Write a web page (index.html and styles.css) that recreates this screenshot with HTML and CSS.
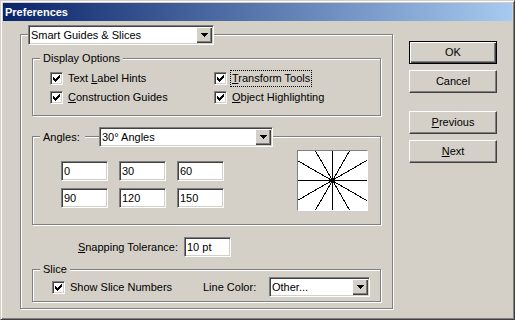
FILE: index.html
```html
<!DOCTYPE html>
<html lang="en">
<head>
  <meta charset="UTF-8" />
  <title>Preferences</title>
  <link rel="stylesheet" href="styles.css">
</head>
<body>
  <div class="window">
    <div class="titlebar">Preferences</div>

    <div class="layout">
      <!-- Main panel, the combo sits on its top edge -->
      <div class="main-group">
        <div class="combo combo-main">
          <span class="combo-text">Smart Guides &amp; Slices</span>
          <span class="combo-btn"><svg width="7" height="4" viewBox="0 0 7 4"><path d="M0 0h7v1H0zM1 1h5v1H1zM2 2h3v1H2zM3 3h1v1H3z"/></svg></span>
        </div>

        <div class="group group-display">
          <div class="legend">Display Options</div>
          <div class="check-grid">
            <div class="check">
              <span class="box"><svg width="7" height="7" viewBox="0 0 7 7"><path d="M0 2h1v3H0zM1 3h1v3H1zM2 4h1v3H2zM3 3h1v3H3zM4 2h1v3H4zM5 1h1v3H5zM6 0h1v3H6z"/></svg></span>
              <span>Text <u>L</u>abel Hints</span>
            </div>
            <div class="check">
              <span class="box"><svg width="7" height="7" viewBox="0 0 7 7"><path d="M0 2h1v3H0zM1 3h1v3H1zM2 4h1v3H2zM3 3h1v3H3zM4 2h1v3H4zM5 1h1v3H5zM6 0h1v3H6z"/></svg></span>
              <span class="focused"><u>T</u>ransform Tools</span>
            </div>
            <div class="check">
              <span class="box"><svg width="7" height="7" viewBox="0 0 7 7"><path d="M0 2h1v3H0zM1 3h1v3H1zM2 4h1v3H2zM3 3h1v3H3zM4 2h1v3H4zM5 1h1v3H5zM6 0h1v3H6z"/></svg></span>
              <span><u>C</u>onstruction Guides</span>
            </div>
            <div class="check">
              <span class="box"><svg width="7" height="7" viewBox="0 0 7 7"><path d="M0 2h1v3H0zM1 3h1v3H1zM2 4h1v3H2zM3 3h1v3H3zM4 2h1v3H4zM5 1h1v3H5zM6 0h1v3H6z"/></svg></span>
              <span><u>O</u>bject Highlighting</span>
            </div>
          </div>
        </div>

        <div class="group group-angles">
          <div class="legend-row">
            <span class="legend-label">Angles:</span>
            <div class="combo combo-angles">
              <span class="combo-text">30° Angles</span>
              <span class="combo-btn"><svg width="7" height="4" viewBox="0 0 7 4"><path d="M0 0h7v1H0zM1 1h5v1H1zM2 2h3v1H2zM3 3h1v1H3z"/></svg></span>
            </div>
          </div>
          <div class="angles-body">
            <div class="angle-grid">
              <div class="field">0</div>
              <div class="field">30</div>
              <div class="field">60</div>
              <div class="field">90</div>
              <div class="field">120</div>
              <div class="field">150</div>
            </div>
            <svg class="dial" width="69" height="59" viewBox="0 0 69 59" shape-rendering="crispEdges">
              <g stroke="#000" stroke-width="1">
                <line x1="-26" y1="29.5" x2="94" y2="29.5" />
                <line x1="34.5" y1="-31" x2="34.5" y2="89" />
                <line x1="-18" y1="59.5" x2="86" y2="-0.5" />
                <line x1="4.5" y1="81.5" x2="64.5" y2="-22.5" />
                <line x1="64.5" y1="81.5" x2="4.5" y2="-22.5" />
                <line x1="86" y1="59.5" x2="-18" y2="-0.5" />
              </g>
            </svg>
          </div>
        </div>

        <div class="snap-row">
          <span class="snap-label"><u>S</u>napping Tolerance:</span>
          <div class="field">10 pt</div>
        </div>

        <div class="group group-slice">
          <div class="legend">Slice</div>
          <div class="slice-row">
            <div class="check slice-check">
              <span class="box"><svg width="7" height="7" viewBox="0 0 7 7"><path d="M0 2h1v3H0zM1 3h1v3H1zM2 4h1v3H2zM3 3h1v3H3zM4 2h1v3H4zM5 1h1v3H5zM6 0h1v3H6z"/></svg></span>
              <span>Show Slice Numbers</span>
            </div>
            <span class="line-label">Line Color:</span>
            <div class="combo combo-slice">
              <span class="combo-text">Other...</span>
              <span class="combo-btn"><svg width="7" height="4" viewBox="0 0 7 4"><path d="M0 0h7v1H0zM1 1h5v1H1zM2 2h3v1H2zM3 3h1v1H3z"/></svg></span>
            </div>
          </div>
        </div>
      </div>

      <!-- Dialog buttons -->
      <div class="buttons">
        <div class="btn btn-default">OK</div>
        <div class="btn">Cancel</div>
        <div class="btn btn-gap"><u>P</u>revious</div>
        <div class="btn"><u>N</u>ext</div>
      </div>
    </div>
  </div>
</body>
</html>
```

FILE: styles.css
```css
body {
  margin: 0;
  font-family: "Liberation Sans", Arial, sans-serif;
  font-size: 11px;
  color: #000;
  background: #d4d0c8;
}

u {
  text-decoration: underline;
}

.window {
  width: 515px;
  height: 320px;
  box-sizing: border-box;
  background: #d4d0c8;
  border: 1px solid;
  border-color: #d4d0c8 #404040 #404040 #d4d0c8;
  box-shadow: inset 1px 1px #fff, inset -1px -1px #808080;
  padding: 2px;
}

.titlebar {
  height: 18px;
  line-height: 18px;
  padding-left: 2px;
  color: #fff;
  font-weight: bold;
  background: linear-gradient(to right, #0a246a, #a6caf0);
}

.layout {
  display: flex;
  align-items: flex-start;
  padding-left: 17px;
}

/* etched group boxes */
.main-group,
.group {
  box-sizing: border-box;
  border: 1px solid #808080;
  box-shadow: inset 1px 1px #fff, 1px 1px #fff;
}

.main-group {
  width: 373px;
  margin-top: 13px;
  margin-right: 16px;
  padding: 0 11px 6px;
}

.legend {
  width: fit-content;
  margin: -7px 0 0 7px;
  padding: 0 3px;
  line-height: 13px;
  background: #d4d0c8;
}

/* sunken combo boxes and fields */
.combo,
.field {
  box-sizing: border-box;
  height: 20px;
  background: #fff;
  border: 1px solid;
  border-color: #808080 #fff #fff #808080;
  box-shadow: inset 1px 1px #404040, inset -1px -1px #d4d0c8;
  padding: 1px;
}

.combo {
  display: flex;
}

.combo-text {
  flex: 1;
  line-height: 16px;
  padding-left: 1px;
  white-space: nowrap;
}

.combo-btn {
  width: 16px;
  height: 16px;
  box-sizing: border-box;
  background: #d4d0c8;
  box-shadow: inset 1px 1px #fff, inset -1px -1px #404040, inset -2px -2px #808080;
  display: flex;
  justify-content: center;
  align-items: center;
}

.combo-btn svg {
  display: block;
}

.field {
  line-height: 16px;
  padding-left: 2px;
}

.combo-main {
  width: 186px;
  margin: -10px 0 0 -4px;
}

.group-display {
  margin-top: 13px;
  padding-bottom: 11px;
}

.check-grid {
  display: grid;
  grid-template-columns: 164px auto;
  row-gap: 6px;
  margin-top: 7px;
  padding-left: 17px;
}

.check {
  display: flex;
  align-items: center;
  gap: 5px;
  line-height: 13px;
  white-space: nowrap;
}

.box {
  width: 13px;
  height: 13px;
  box-sizing: border-box;
  flex: none;
  background: #fff;
  border: 1px solid;
  border-color: #808080 #fff #fff #808080;
  box-shadow: inset 1px 1px #404040, inset -1px -1px #d4d0c8;
  display: flex;
  justify-content: center;
  align-items: center;
}

.box svg {
  display: block;
}

.focused {
  outline: 1px dotted #000;
  outline-offset: 1px;
}

.group-angles {
  margin-top: 20px;
  padding-bottom: 13px;
}

.legend-row {
  display: flex;
  margin: -10px 0 0 7px;
  height: 20px;
  align-items: center;
}

.legend-label {
  width: 45px;
  box-sizing: border-box;
  padding: 0 3px;
  line-height: 13px;
  background: #d4d0c8;
}

.combo-angles {
  width: 174px;
  margin-left: 14px;
}

.angles-body {
  display: flex;
  align-items: flex-start;
  margin-top: 3px;
  padding-left: 28px;
}

.angle-grid {
  display: grid;
  grid-template-columns: repeat(3, 47px);
  column-gap: 11px;
  row-gap: 7px;
  margin-top: 11px;
}

.dial {
  display: block;
  margin-left: auto;
  margin-right: 12px;
  background: #fff;
  border: 1px solid;
  border-color: #808080 #fff #fff #808080;
}

.snap-row {
  display: flex;
  align-items: center;
  margin-top: 12px;
}

.snap-label {
  width: 146px;
  text-align: right;
  margin-right: 6px;
}

.snap-row .field {
  width: 47px;
}

.group-slice {
  margin-top: 12px;
  padding-bottom: 4px;
}

.slice-row {
  display: flex;
  align-items: center;
  height: 20px;
  margin-top: 1px;
  padding-left: 19px;
}

.slice-check {
  width: 151px;
}

.line-label {
  width: 66px;
}

.combo-slice {
  width: 101px;
}

/* buttons */
.buttons {
  display: flex;
  flex-direction: column;
  gap: 6px;
  margin-top: 20px;
}

.btn {
  width: 88px;
  height: 23px;
  box-sizing: border-box;
  text-align: center;
  line-height: 21px;
  border: 1px solid;
  border-color: #fff #404040 #404040 #fff;
  box-shadow: inset -1px -1px #808080;
}

.btn-default {
  border-color: #000;
  line-height: 21px;
  box-shadow: inset 1px 1px #fff, inset -1px -1px #404040, inset -2px -2px #808080;
}

.btn-gap {
  margin-top: 12px;
}
```
